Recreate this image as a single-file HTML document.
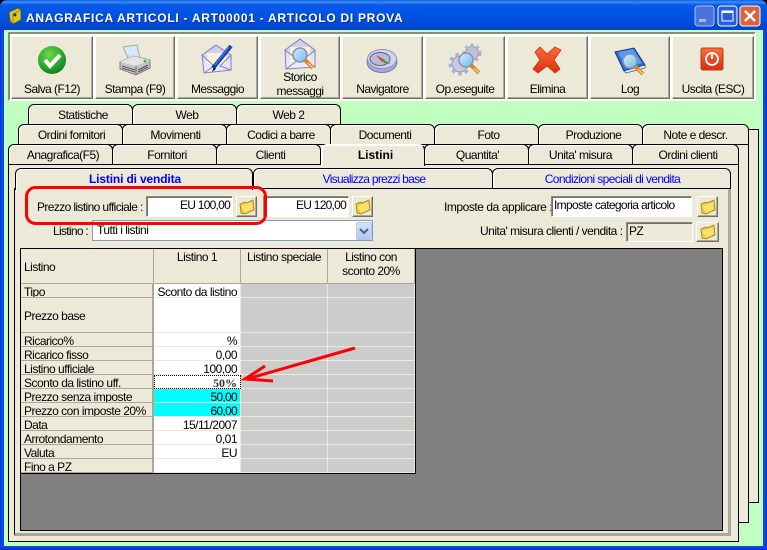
<!DOCTYPE html>
<html><head><meta charset="utf-8"><title>Anagrafica articoli</title>
<style>
html,body{margin:0;padding:0;width:767px;height:550px;overflow:hidden;background:#000}
*{box-sizing:border-box}
body{font:12px/14px "Liberation Sans",sans-serif;color:#000;position:relative;letter-spacing:-.5px}
div{position:absolute}
#win{left:0;top:0;width:767px;height:550px;background:#0a3ed8;border-radius:7px 7px 0 0;overflow:hidden}
#tb{left:0;top:0;width:767px;height:30px;background:linear-gradient(#0a5be8 0,#3c8cf5 2px,#0a5ae6 5px,#0055e5 12px,#0050e0 20px,#0046cf 27px,#0a3fc4 30px)}
#ttl{left:26px;top:10px;color:#fff;font:bold 12px/16px "Liberation Sans",sans-serif;white-space:nowrap;letter-spacing:.72px;text-shadow:1px 1px #0f2f90}
#lb{left:0;top:30px;width:4px;height:520px;background:linear-gradient(90deg,#0a35c8,#0a50ea 60%,#0a3ed8)}
#rb{left:763px;top:30px;width:4px;height:520px;background:linear-gradient(90deg,#0a3ed8,#0a50ea 40%,#0a2fb8)}
#bb{left:0;top:546px;width:767px;height:4px;background:linear-gradient(#0a50ea,#0a30c0)}
#cl{left:4px;top:30px;width:759px;height:516px;background:#c0ffc0}
#tp{left:8px;top:32px;width:748px;height:69px;background:#fff;border:2px solid #8f8b7c;border-right:2px solid #fff;border-bottom:2px solid #fff}
.b{top:36px;height:63px;background:#ece9d8;border:1px solid;border-color:#fff #716f64 #716f64 #fff;box-shadow:inset -1px -1px #aca899;text-align:center;padding-top:45px;white-space:nowrap;letter-spacing:-.55px}
.t{height:21px;background:#ece9d8;border:1px solid #000;border-bottom:1px solid #000;border-radius:6px 6px 0 0;box-shadow:inset 1px 1px #fff;text-align:center;line-height:20px;white-space:nowrap;padding-left:5px}
.pg{background:#ece9d8;border:1px solid #000}
.l{white-space:nowrap;line-height:14px}
.i{background:#fff;border:1px solid;border-color:#8f8b7c #fff #fff #8f8b7c;box-shadow:inset 1px 1px #716f64;white-space:nowrap;line-height:16px;padding:0 2px;letter-spacing:-.65px}
.fb{background:#ece9d8;border:1px solid;border-color:#fff #716f64 #716f64 #fff;box-shadow:inset -1px -1px #aca899}
table{position:absolute;left:21px;top:249px;border-collapse:separate;border-spacing:0;table-layout:fixed;width:394px}
td{padding:3px 0 0;height:14px;line-height:10px;font-size:12px;overflow:hidden;white-space:nowrap;vertical-align:top}
td.h{background:#ece9d8;border-right:1px solid #aca899;border-bottom:1px solid #aca899;text-align:center;vertical-align:top;padding-top:1px;line-height:14px}
td.n{background:#ece9d8;border-right:2px solid #aca899;border-bottom:1px solid #aca899;padding-left:3px}
td.v{background:#fff;border-right:1px solid #ece9d8;border-bottom:1px solid #ece9d8;text-align:right;padding-right:3px}
td.g{background:#ccc;border-right:1px solid #ece9d8;border-bottom:1px solid #ece9d8}
td.c{background:#0ff;border-right:1px solid #ece9d8;border-bottom:1px solid #ece9d8;text-align:right;padding-right:3px;letter-spacing:-.7px}
svg{position:absolute;left:0;top:0}
</style></head><body>
<div id="win">
<div id="tb"></div>
<div id="ttl">ANAGRAFICA ARTICOLI - ART00001 - ARTICOLO DI PROVA</div>
<div id="lb"></div><div id="rb"></div><div id="bb"></div>
<div id="cl"></div>
</div>
<div id="tp"></div>
<div class="b" style="left:11px;width:82px">Salva (F12)</div>
<div class="b" style="left:95px;width:80px">Stampa (F9)</div>
<div class="b" style="left:177px;width:81px">Messaggio</div>
<div class="b" style="left:260px;width:80px;padding-top:33px">Storico<br>messaggi</div>
<div class="b" style="left:342px;width:81px">Navigatore</div>
<div class="b" style="left:425px;width:80px">Op.eseguite</div>
<div class="b" style="left:507px;width:81px">Elimina</div>
<div class="b" style="left:590px;width:80px">Log</div>
<div class="b" style="left:672px;width:82px">Uscita (ESC)</div>

<div class="pg" style="left:28px;top:129px;width:731px;height:374px"></div>
<div class="pg" style="left:18px;top:144px;width:731px;height:379px"></div>

<div class="t" style="left:28px;top:104px;width:105px">Statistiche</div>
<div class="t" style="left:132px;top:104px;width:105px">Web</div>
<div class="t" style="left:236px;top:104px;width:105px;padding-left:0">Web 2</div>

<div class="t" style="left:18px;top:124px;width:105px;padding-left:2px">Ordini fornitori</div>
<div class="t" style="left:122px;top:124px;width:105px;padding-left:2px">Movimenti</div>
<div class="t" style="left:226px;top:124px;width:105px">Codici a barre</div>
<div class="t" style="left:330px;top:124px;width:105px">Documenti</div>
<div class="t" style="left:434px;top:124px;width:105px;padding-left:4px">Foto</div>
<div class="t" style="left:538px;top:124px;width:105px;padding-left:6px">Produzione</div>
<div class="t" style="left:642px;top:124px;width:107px;padding-left:0">Note e descr.</div>

<div class="pg" style="left:8px;top:164px;width:731px;height:378px"></div>
<div class="t" style="left:8px;top:144px;width:105px">Anagrafica(F5)</div>
<div class="t" style="left:112px;top:144px;width:105px">Fornitori</div>
<div class="t" style="left:216px;top:144px;width:105px;padding-left:4px">Clienti</div>
<div class="t" style="left:424px;top:144px;width:105px;padding-left:2px">Quantita'</div>
<div class="t" style="left:528px;top:144px;width:105px;padding-left:0">Unita' misura</div>
<div class="t" style="left:632px;top:144px;width:107px">Ordini clienti</div>
<div class="t" style="left:321px;top:144px;width:104px;height:22px;border-bottom:none;border-color:#fff #000 #fff #fff;font-weight:bold;padding-left:5px;letter-spacing:0">Listini</div>

<div style="left:14px;top:188px;width:717px;height:348px;background:#ece9d8;border-left:1px solid #000;border-top:1px solid #000;border-right:3px solid #aca899;border-bottom:3px solid #aca899"></div>
<div class="t" style="left:253px;top:168px;width:240px;color:#00f;letter-spacing:-.72px;line-height:21px;padding-left:2px">Visualizza prezzi base</div>
<div class="t" style="left:492px;top:168px;width:239px;color:#00f;letter-spacing:-.62px;line-height:21px;padding-left:2px">Condizioni speciali di vendita</div>
<div class="t" style="left:15px;top:168px;width:238px;height:22px;border-bottom:none;font-weight:bold;color:#00f;line-height:21px;letter-spacing:-.15px;padding-left:2px">Listini di vendita</div>

<div class="l" style="left:37px;top:200px;letter-spacing:-.62px">Prezzo listino ufficiale :</div>
<div class="i" style="left:146px;top:196px;width:87px;height:21px;text-align:right;letter-spacing:-.75px">EU 100,00</div>
<div class="fb" style="left:236px;top:196px;width:21px;height:21px"></div>
<div class="i" style="left:263px;top:196px;width:86px;height:21px;text-align:right;letter-spacing:-.75px">EU 120,00</div>
<div class="fb" style="left:352px;top:196px;width:21px;height:21px"></div>
<div class="l" style="left:444px;top:200px;letter-spacing:-.45px">Imposte da applicare :</div>
<div class="i" style="left:551px;top:196px;width:141px;height:21px">Imposte categoria articolo</div>
<div class="fb" style="left:697px;top:196px;width:21px;height:21px"></div>
<div class="l" style="left:53px;top:224px;letter-spacing:-.7px">Listino :</div>
<div style="left:92px;top:220px;width:281px;height:21px;background:#fff;border:1px solid #7f9db9;padding-left:4px;line-height:19px;white-space:nowrap">Tutti i listini</div>
<div style="left:356px;top:222px;width:16px;height:18px;background:linear-gradient(#d5e2fb,#b2c8f3);border:1px solid #b4c8f0;border-radius:2px"></div>
<div class="l" style="left:480px;top:224px;letter-spacing:-.5px">Unita' misura clienti / vendita :</div>
<div class="i" style="left:626px;top:222px;width:67px;height:20px;background:#ece9d8">PZ</div>
<div class="fb" style="left:696px;top:222px;width:23px;height:20px"></div>

<div style="left:20px;top:248px;width:703px;height:283px;background:#808080;border:1px solid #000"></div>
<div style="left:21px;top:473px;width:395px;height:1px;background:#000"></div>
<div style="left:415px;top:249px;width:1px;height:225px;background:#000"></div>
<table>
<colgroup><col style="width:133px"><col style="width:87px"><col style="width:87px"><col style="width:87px"></colgroup>
<tr style="height:35px"><td class="h" style="text-align:left;padding:2px 0 0 3px;vertical-align:middle">Listino</td><td class="h">Listino 1</td><td class="h">Listino speciale</td><td class="h">Listino con<br>sconto 20%</td></tr>
<tr><td class="n">Tipo</td><td class="v">Sconto da listino</td><td class="g"></td><td class="g"></td></tr>
<tr style="height:35px"><td class="n" style="vertical-align:middle;line-height:14px;padding-top:1px">Prezzo base</td><td class="v"></td><td class="g"></td><td class="g"></td></tr>
<tr><td class="n">Ricarico%</td><td class="v">%</td><td class="g"></td><td class="g"></td></tr>
<tr><td class="n">Ricarico fisso</td><td class="v">0,00</td><td class="g"></td><td class="g"></td></tr>
<tr><td class="n">Listino ufficiale</td><td class="v">100,00</td><td class="g"></td><td class="g"></td></tr>
<tr><td class="n">Sconto da listino uff.</td><td class="v" style="outline:1px dotted #000;outline-offset:-1px;font:bold 12px/10px 'Liberation Serif',serif;color:#333;letter-spacing:0">50%</td><td class="g"></td><td class="g"></td></tr>
<tr><td class="n">Prezzo senza imposte</td><td class="c">50,00</td><td class="g"></td><td class="g"></td></tr>
<tr><td class="n">Prezzo con imposte 20%</td><td class="c">60,00</td><td class="g"></td><td class="g"></td></tr>
<tr><td class="n">Data</td><td class="v">15/11/2007</td><td class="g"></td><td class="g"></td></tr>
<tr><td class="n">Arrotondamento</td><td class="v">0,01</td><td class="g"></td><td class="g"></td></tr>
<tr><td class="n">Valuta</td><td class="v">EU</td><td class="g"></td><td class="g"></td></tr>
<tr><td class="n">Fino a PZ</td><td class="v"></td><td class="g"></td><td class="g"></td></tr>
</table>

<svg width="767" height="550" viewBox="0 0 767 550">
<defs>
<radialGradient id="gr" cx=".4" cy=".3" r=".8"><stop offset="0" stop-color="#6fd84a"/><stop offset=".6" stop-color="#2aa52a"/><stop offset="1" stop-color="#0a6d18"/></radialGradient>
<linearGradient id="lens" x1="0" y1="0" x2="1" y2="1"><stop offset="0" stop-color="#d6eefc"/><stop offset="1" stop-color="#6fb8e8"/></linearGradient>
<linearGradient id="env" x1="0" y1="0" x2="0" y2="1"><stop offset="0" stop-color="#c8c8f0"/><stop offset="1" stop-color="#f0f0fc"/></linearGradient>
<linearGradient id="rd" x1="0" y1="0" x2="0" y2="1"><stop offset="0" stop-color="#ff6a3a"/><stop offset="1" stop-color="#d8300f"/></linearGradient>
<g id="fold"><path d="M1 5 L6 3 L7 4 L14 1 L15 11 L6 15 L2 14 Z" fill="#f0c830" stroke="#a08010" stroke-width=".8"/><path d="M2 7 L13 3 L14 10 L6 14 Z" fill="#f8e070"/></g>
<g id="mag"><path d="M5 5 L13 13" stroke="#e08020" stroke-width="4"/><path d="M8 8 L13 13" stroke="#f8d080" stroke-width="1.5"/><circle r="7" fill="url(#lens)" stroke="#8a94a8" stroke-width="1.5"/></g>
</defs>
<!-- title icon -->
<path d="M9 12 L18 8 L21 10 L21 20 L13 24 L10 21 Z" fill="#d8c820" stroke="#5a5010" stroke-width=".8"/><path d="M13 14 L21 10 M13 14 V24" stroke="#8a7a10" stroke-width=".8"/><circle cx="15" cy="15" r="1.4" fill="#222"/>
<!-- window buttons -->
<rect x="695" y="6" width="19" height="20" rx="3" fill="#4a72d8" stroke="#a8c0f0"/><rect x="699" y="19" width="7" height="3" fill="#9db8ec"/>
<rect x="718" y="6" width="19" height="20" rx="3" fill="#2a5ce0" stroke="#fff"/><rect x="722" y="11" width="11" height="10" fill="none" stroke="#fff"/><rect x="722" y="11" width="11" height="2" fill="#fff"/>
<rect x="740" y="6" width="20" height="20" rx="3" fill="#e0603a" stroke="#fff"/><path d="M745 11 L755 21 M755 11 L745 21" stroke="#fff" stroke-width="2.4"/>
<!-- salva -->
<circle cx="52" cy="60" r="14" fill="url(#gr)"/><path d="M45 60 L50 66 L60 55" fill="none" stroke="#fff" stroke-width="4"/>
<!-- stampa -->
<path d="M123 47 L137 45 L140 59 L129 60 Z" fill="#d8e8fa" stroke="#9aa"/><path d="M120 62 L133 56 L150 60 L150 68 L136 75 L120 69 Z" fill="#c4c4c4" stroke="#666" stroke-width=".8"/><path d="M120 62 L136 66 L150 60 L133 56 Z" fill="#e4e4e4"/><path d="M136 66 V75" stroke="#666"/><path d="M122 66 L135 70 M122 68 L135 72 M138 70 L148 65 M138 72 L148 67" stroke="#555"/><circle cx="145" cy="61" r="1.4" fill="#40b040"/>
<!-- messaggio -->
<path d="M202 55 L216 45 L231 55 L231 70 L204 73 Z" fill="url(#env)" stroke="#8080c0"/><path d="M207 53 L226 53 L226 64 L207 64 Z" fill="#fbf3d8"/><path d="M202 55 L214 66 L204 73 M231 55 L220 66 L231 70" fill="none" stroke="#8080c0"/>
<path d="M231 46 L213 68" stroke="#1040b0" stroke-width="4"/><path d="M214 66 L212 72 L216 69 Z" fill="#222"/><path d="M229 47 L215 65" stroke="#5a90f0"/>
<!-- storico -->
<path d="M285 50 L300 39 L315 50 L315 67 L286 69 Z" fill="url(#env)" stroke="#8080c0"/><path d="M290 47 L310 47 L310 62 L290 62 Z" fill="#fbf3d8"/><path d="M285 50 L298 60 L286 69 M315 50 L303 60 L315 67" fill="none" stroke="#8080c0"/>
<use href="#mag" x="300" y="55"/>
<!-- navigatore -->
<ellipse cx="382" cy="62" rx="15" ry="10.5" fill="#a8a8d8" stroke="#7878b0"/><ellipse cx="382" cy="59" rx="14.5" ry="9.5" fill="#d4d4f2" stroke="#9090c0"/><ellipse cx="380" cy="59" rx="10" ry="6.5" fill="#b8bcd8" stroke="#5a6288"/><path d="M376 55 L385 60 L382 62 Z" fill="#e04020"/><path d="M382 59 L391 64 L384 63 Z" fill="#30a040"/>
<!-- op.eseguite -->
<circle cx="472" cy="53" r="6.5" fill="#c0c0dc" stroke="#9a9ab8" stroke-width="1"/><circle cx="472" cy="53" r="8" fill="none" stroke="#b0b0d0" stroke-width="3" stroke-dasharray="3 3"/>
<circle cx="460" cy="64" r="8" fill="#c8c8e4" stroke="#9a9ab8"/><circle cx="460" cy="64" r="10" fill="none" stroke="#b0b0d0" stroke-width="3" stroke-dasharray="3.5 3.5"/>
<use href="#mag" x="466" y="60"/>
<!-- elimina -->
<path d="M540 47 L547 54 L555 47 L561 50 L554 60 L560 69 L555 73 L547 66 L538 73 L533 69 L540 60 L535 52 Z" fill="url(#rd)" stroke="#c83010" stroke-width=".8"/>
<!-- log -->
<path d="M615 52 L634 48 L645 65 L624 71 Z" fill="#2a70d8" stroke="#103890"/><path d="M618 52 L633 49 L642 63 L626 67 Z" fill="#5a9af0"/><path d="M624 71 L645 65 L645 68 L626 73 Z" fill="#e8e8f0" stroke="#103890" stroke-width=".6"/>
<use href="#mag" x="630" y="61"/>
<!-- uscita -->
<rect x="701" y="48" width="22" height="22" rx="2" fill="url(#rd)" stroke="#c03a18"/><circle cx="712" cy="59" r="6" fill="none" stroke="#fff" stroke-width="1.8"/><path d="M712 54 V59" stroke="#fff" stroke-width="2"/>
<!-- folders -->
<use href="#fold" x="239" y="199"/><use href="#fold" x="355" y="199"/><use href="#fold" x="700" y="199"/><use href="#fold" x="700" y="224"/>
<!-- combo arrow -->
<path d="M360 229 L364 233 L368 229" fill="none" stroke="#4d6185" stroke-width="2"/>
<!-- annotations -->
<rect x="26.5" y="187.5" width="239" height="36" rx="9" fill="none" stroke="#f00" stroke-width="3"/>
<path d="M355 348 L247 379" stroke="#f00" stroke-width="3" fill="none"/><path d="M265 366 L245 379 L273 381" stroke="#f00" stroke-width="3" fill="none"/>
</svg>
</body></html>
